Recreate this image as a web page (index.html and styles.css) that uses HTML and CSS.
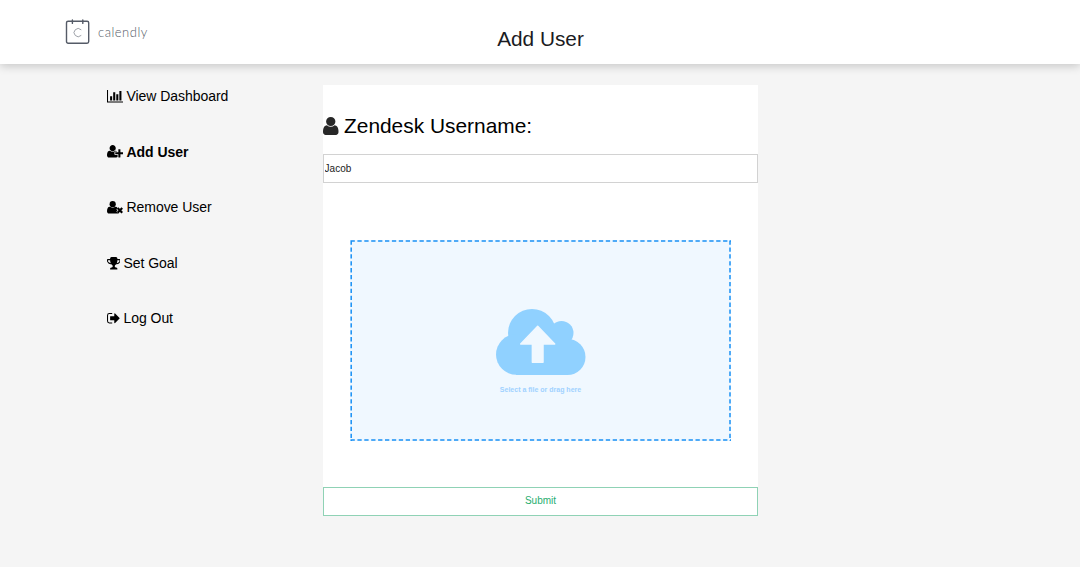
FILE: index.html
```html
<!DOCTYPE html>
<html lang="en">
<head>
<meta charset="utf-8">
<title>Add User</title>
<link rel="stylesheet" href="styles.css">
</head>
<body>
<header class="header">
  <div class="brand">
    <svg class="brand-mark" viewBox="0 0 25 26" fill="none" stroke="#555b67" stroke-width="1.4" stroke-linecap="round"><rect x="1.5" y="2.2" width="22.2" height="22" rx="1.6"/><path d="M7.4 .9v3.5M17.8 .9v3.5"/><path d="M16 10.6A4.1 4.1 0 1 0 16 16.6" stroke="#858a93" stroke-width=".8"/></svg>
    <span class="brand-name">calendly</span>
  </div>
  <h1 class="title">Add User</h1>
</header>
<div class="layout">
  <nav class="nav">
    <a class="nav-item"><svg class="icon wide" viewBox="0 0 2048 1792"><path d="M640 896v512h-256v-512h256zm384-512v1024h-256v-1024h256zm1024 1152v128h-2048v-1536h128v1408h1920zm-640-896v768h-256v-768h256zm384-384v1152h-256v-1152h256z"/></svg><span>View Dashboard</span></a>
    <a class="nav-item active"><svg class="icon wide" viewBox="0 0 2048 1792"><path d="M704 896q-159 0-271.5-112.5t-112.5-271.5 112.5-271.5 271.5-112.5 271.5 112.5 112.5 271.5-112.5 271.5-271.5 112.5zm960 128h352q13 0 22.5 9.5t9.5 22.5v192q0 13-9.5 22.5t-22.5 9.5h-352v352q0 13-9.5 22.5t-22.5 9.5h-192q-13 0-22.5-9.5t-9.5-22.5v-352h-352q-13 0-22.5-9.5t-9.5-22.5v-192q0-13 9.5-22.5t22.5-9.5h352v-352q0-13 9.5-22.5t22.5-9.5h192q13 0 22.5 9.5t9.5 22.5v352zm-736 224q0 52 38 90t90 38h256v238q-68 50-171 50h-874q-121 0-194-69t-73-190q0-53 3.5-103.5t14-109 26.5-108.5 43-97.5 62-81 85.5-53.5 111.5-20q19 0 39 17 79 61 154.5 91.5t164.5 30.5 164.5-30.5 154.5-91.5q20-17 39-17 132 0 217 96h-223q-52 0-90 38t-38 90v192z"/></svg><span>Add User</span></a>
    <a class="nav-item"><svg class="icon wide" viewBox="0 0 2048 1792"><circle cx="704" cy="512" r="384"/><path d="M267 1664q-121 0-194-69t-73-190q0-240 87-419t267-159q19 0 39 17 311 244 622 0 20-17 39-17 180 0 267 180l160 657z"/><path d="M1310 1000l580 580m0-580l-580 580" fill="none" stroke="#f5f5f5" stroke-width="420"/><path d="M1310 1000l580 580m0-580l-580 580" fill="none" stroke="#000" stroke-width="270"/></svg><span>Remove User</span></a>
    <a class="nav-item"><svg class="icon" viewBox="0 0 1664 1792"><path d="M458 883q-74-162-74-371h-256v96q0 78 94.5 162t235.5 113zm1078-275v-96h-256q0 209-74 371 141-29 235.5-113t94.5-162zm128-128v128q0 71-41.5 143t-112 130-173 97.5-215.5 44.5q-42 54-95 95-38 34-52.5 72.5t-14.5 89.5q0 54 30.5 91t97.5 37q75 0 133.5 45.5t58.5 114.5v64q0 14-9 23t-23 9h-832q-14 0-23-9t-9-23v-64q0-69 58.5-114.5t133.5-45.5q67 0 97.5-37t30.5-91q0-51-14.5-89.5t-52.5-72.5q-53-41-95-95-113-5-215.5-44.5t-173-97.5-112-130-41.5-143v-128q0-40 28-68t68-28h288v-96q0-66 47-113t113-47h576q66 0 113 47t47 113v96h288q40 0 68 28t28 68z"/></svg><span>Set Goal</span></a>
    <a class="nav-item"><svg class="icon" viewBox="0 0 1664 1792"><path d="M1568 896q0 26-19 45l-544 544q-19 19-45 19t-45-19-19-45v-288h-448q-26 0-45-19t-19-45v-384q0-26 19-45t45-19h448v-288q0-26 19-45t45-19 45 19l544 544q19 19 19 45z"/><path d="M640 320H288q-224 0-224 224v704q0 224 224 224h352" fill="none" stroke="#000" stroke-width="128"/></svg><span>Log Out</span></a>
  </nav>
  <form class="form">
    <h2 class="form-title"><svg class="user-icon" viewBox="0 0 1280 1536" preserveAspectRatio="none"><path transform="translate(0 -128)" d="M1280 1399q0 109-62.5 187t-150.5 78h-854q-88 0-150.5-78t-62.5-187q0-85 8.5-160.5t31.5-152 58.5-131 94-89 134.5-34.5q131 128 313 128t313-128q76 0 134.5 34.5t94 89 58.5 131 31.5 152 8.5 160.5zm-256-887q0 159-112.5 271.5t-271.5 112.5-271.5-112.5-112.5-271.5 112.5-271.5 271.5-112.5 271.5 112.5 112.5 271.5z"/></svg><span>Zendesk Username:</span></h2>
    <input class="field" type="text" value="Jacob">
    <div class="drop">
      <svg class="drop-frame" viewBox="0 0 381 201" fill="none" stroke="#1890f5" stroke-width="1.5" stroke-dasharray="4.3 2.6"><path d="M.5 1H381M.5 200H381M1.2 .5V201M380 .5V201"/></svg>
      <svg class="cloud" viewBox="0 0 90 66" fill="#90d1ff"><circle cx="36" cy="24" r="24"/><circle cx="65.5" cy="24" r="12"/><circle cx="20.3" cy="45.5" r="20.3"/><circle cx="71.5" cy="48" r="18"/><path d="M20 30h51v36H20z"/><path d="M41.7 17.3l17 17.6H47v18.3H36.4V34.9H24.7z" fill="#f0f8ff" stroke="#f0f8ff" stroke-width="1.5" stroke-linejoin="round"/></svg>
      <span class="drop-text">Select a file or drag here</span>
    </div>
    <button class="submit" type="button">Submit</button>
  </form>
</div>
</body>
</html>
```
FILE: styles.css
```css
* { box-sizing: border-box; }
body { margin: 0; min-height: 567px; background: #f5f5f5; color: #000; font-family: "Liberation Sans", Arial, sans-serif; }
.header { height: 64px; background: #fff; box-shadow: 0 2px 9px rgba(0,0,0,.2); display: grid; grid-template-columns: 323px 435px 1fr; }
.brand { display: flex; align-items: flex-start; padding: 19px 0 0 65px; gap: 8px; }
.brand-mark { width: 25px; height: 26px; }
.brand-name { font: 300 13px/26px Lato, sans-serif; letter-spacing: .5px; color: #555c68; }
.title { margin: 0; padding-top: 26px; font-size: 20.8px; line-height: 25px; font-weight: 400; text-align: center; color: #1b1b22; }
.layout { display: grid; grid-template-columns: 323px 435px; padding-top: 21px; }
.nav { padding: 1px 0 0 106.5px; display: flex; flex-direction: column; gap: 35.6px; }
.nav-item { display: flex; align-items: center; gap: 3.5px; height: 20px; font-size: 14px; letter-spacing: -.05px; white-space: nowrap; }
.active { font-weight: 700; }
.icon { width: 13.5px; height: 14.5px; }
.wide { width: 16.5px; }
.form { background: #fff; height: 431px; display: flex; flex-direction: column; }
.form-title { display: flex; align-items: center; gap: 5.5px; margin: 26px 0 14px; height: 29px; font-size: 20.9px; font-weight: 400; white-space: nowrap; }
.user-icon { width: 15.5px; height: 18px; fill: #272727; }
.field { height: 29px; flex-shrink: 0; padding: 0 0 0 .6px; border: 1px solid #d2d2d2; font: 10px "Liberation Sans", Arial, sans-serif; color: #222; }
.drop { position: relative; width: 381px; height: 201px; margin: 57px 27px 46px; flex-shrink: 0; background: #f0f8ff; display: flex; flex-direction: column; align-items: center; padding-top: 69px; }
.drop-frame { position: absolute; inset: 0; width: 100%; height: 100%; }
.cloud { width: 90px; height: 66px; }
.drop-text { margin-top: 9px; font-size: 7px; line-height: 11px; font-weight: 700; color: #a0d2ff; }
.submit { height: 29px; flex-shrink: 0; padding: 0 0 2px; border: 1px solid #8fd2b5; background: #fff; color: #27ae70; font: 10px "Liberation Sans", Arial, sans-serif; }
```
